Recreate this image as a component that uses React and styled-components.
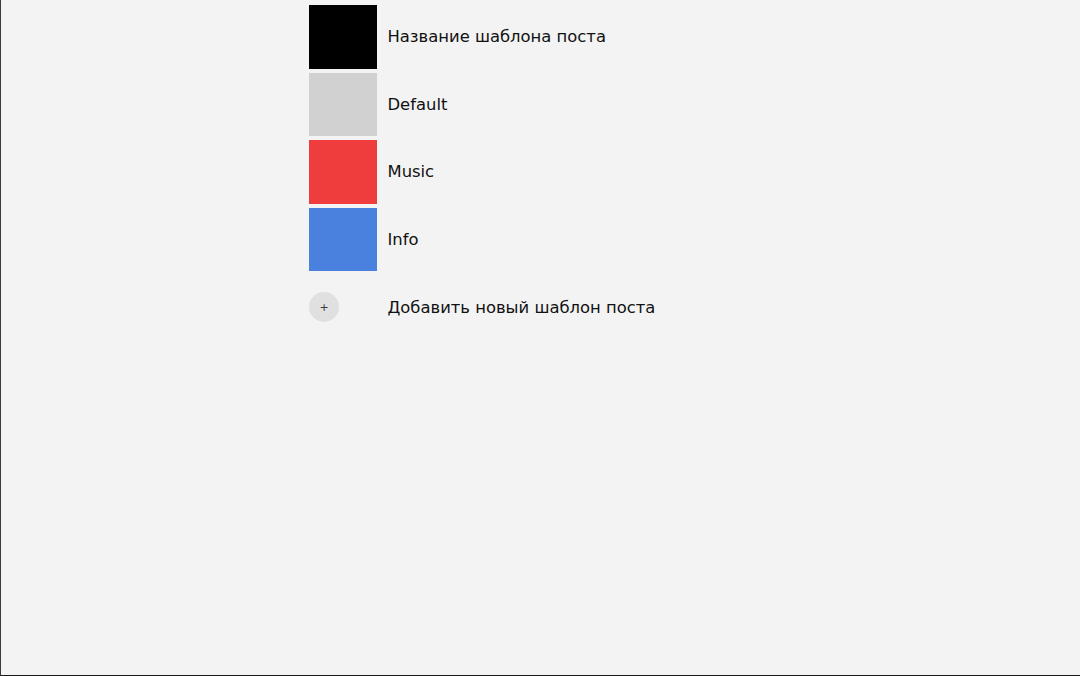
import React from "react";
import styled, { createGlobalStyle } from "styled-components";

const Global = createGlobalStyle`
  html, body { margin: 0; padding: 0; }
  body { background: #f3f3f3; font-family: "DejaVu Sans", Verdana, sans-serif; }
  #root { height: 676px; }
`;

const Frame = styled.div`
  box-sizing: border-box;
  height: 676px;
  width: 1080px;
  border-left: 1px solid #3a3a3a;
  border-bottom: 1px solid #1a1a1a;
  background: #f3f3f3;
  padding: 5px 0 0 308px;
`;

const List = styled.ul`
  list-style: none;
  margin: 0;
  padding: 0;
  display: flex;
  flex-direction: column;
  gap: 4px;
`;

const Row = styled.li`
  display: flex;
  align-items: center;
  height: 63.5px;
`;

const Swatch = styled.div`
  width: 67.5px;
  height: 63.5px;
  background: ${(p) => p.$color};
  flex: none;
`;

const Label = styled.span`
  margin-left: 11px;
  font-size: 16.4px;
  color: #111;
`;

const AddRow = styled.div`
  display: flex;
  align-items: center;
  margin-top: 21px;
`;

const AddButton = styled.div`
  width: 30px;
  height: 30px;
  border-radius: 50%;
  background: #e0e0e0;
  display: flex;
  align-items: center;
  justify-content: center;
  flex: none;
`;

const Plus = styled.span`
  color: #3c3c3c;
  font-size: 11px;
  line-height: 1;
  font-family: "DejaVu Sans", sans-serif;
`;

const AddLabel = styled.span`
  margin-left: 48.5px;
  font-size: 16.4px;
  color: #111;
`;

const templates = [
  { name: "Название шаблона поста", color: "#000000" },
  { name: "Default", color: "#d1d1d1" },
  { name: "Music", color: "#ef3d3d" },
  { name: "Info", color: "#4a81de" },
];

export default function App() {
  return (
    <>
      <Global />
      <Frame>
        <List>
          {templates.map((t) => (
            <Row key={t.name}>
              <Swatch $color={t.color} />
              <Label>{t.name}</Label>
            </Row>
          ))}
        </List>
        <AddRow>
          <AddButton>
            <Plus>+</Plus>
          </AddButton>
          <AddLabel>Добавить новый шаблон поста</AddLabel>
        </AddRow>
      </Frame>
    </>
  );
}
